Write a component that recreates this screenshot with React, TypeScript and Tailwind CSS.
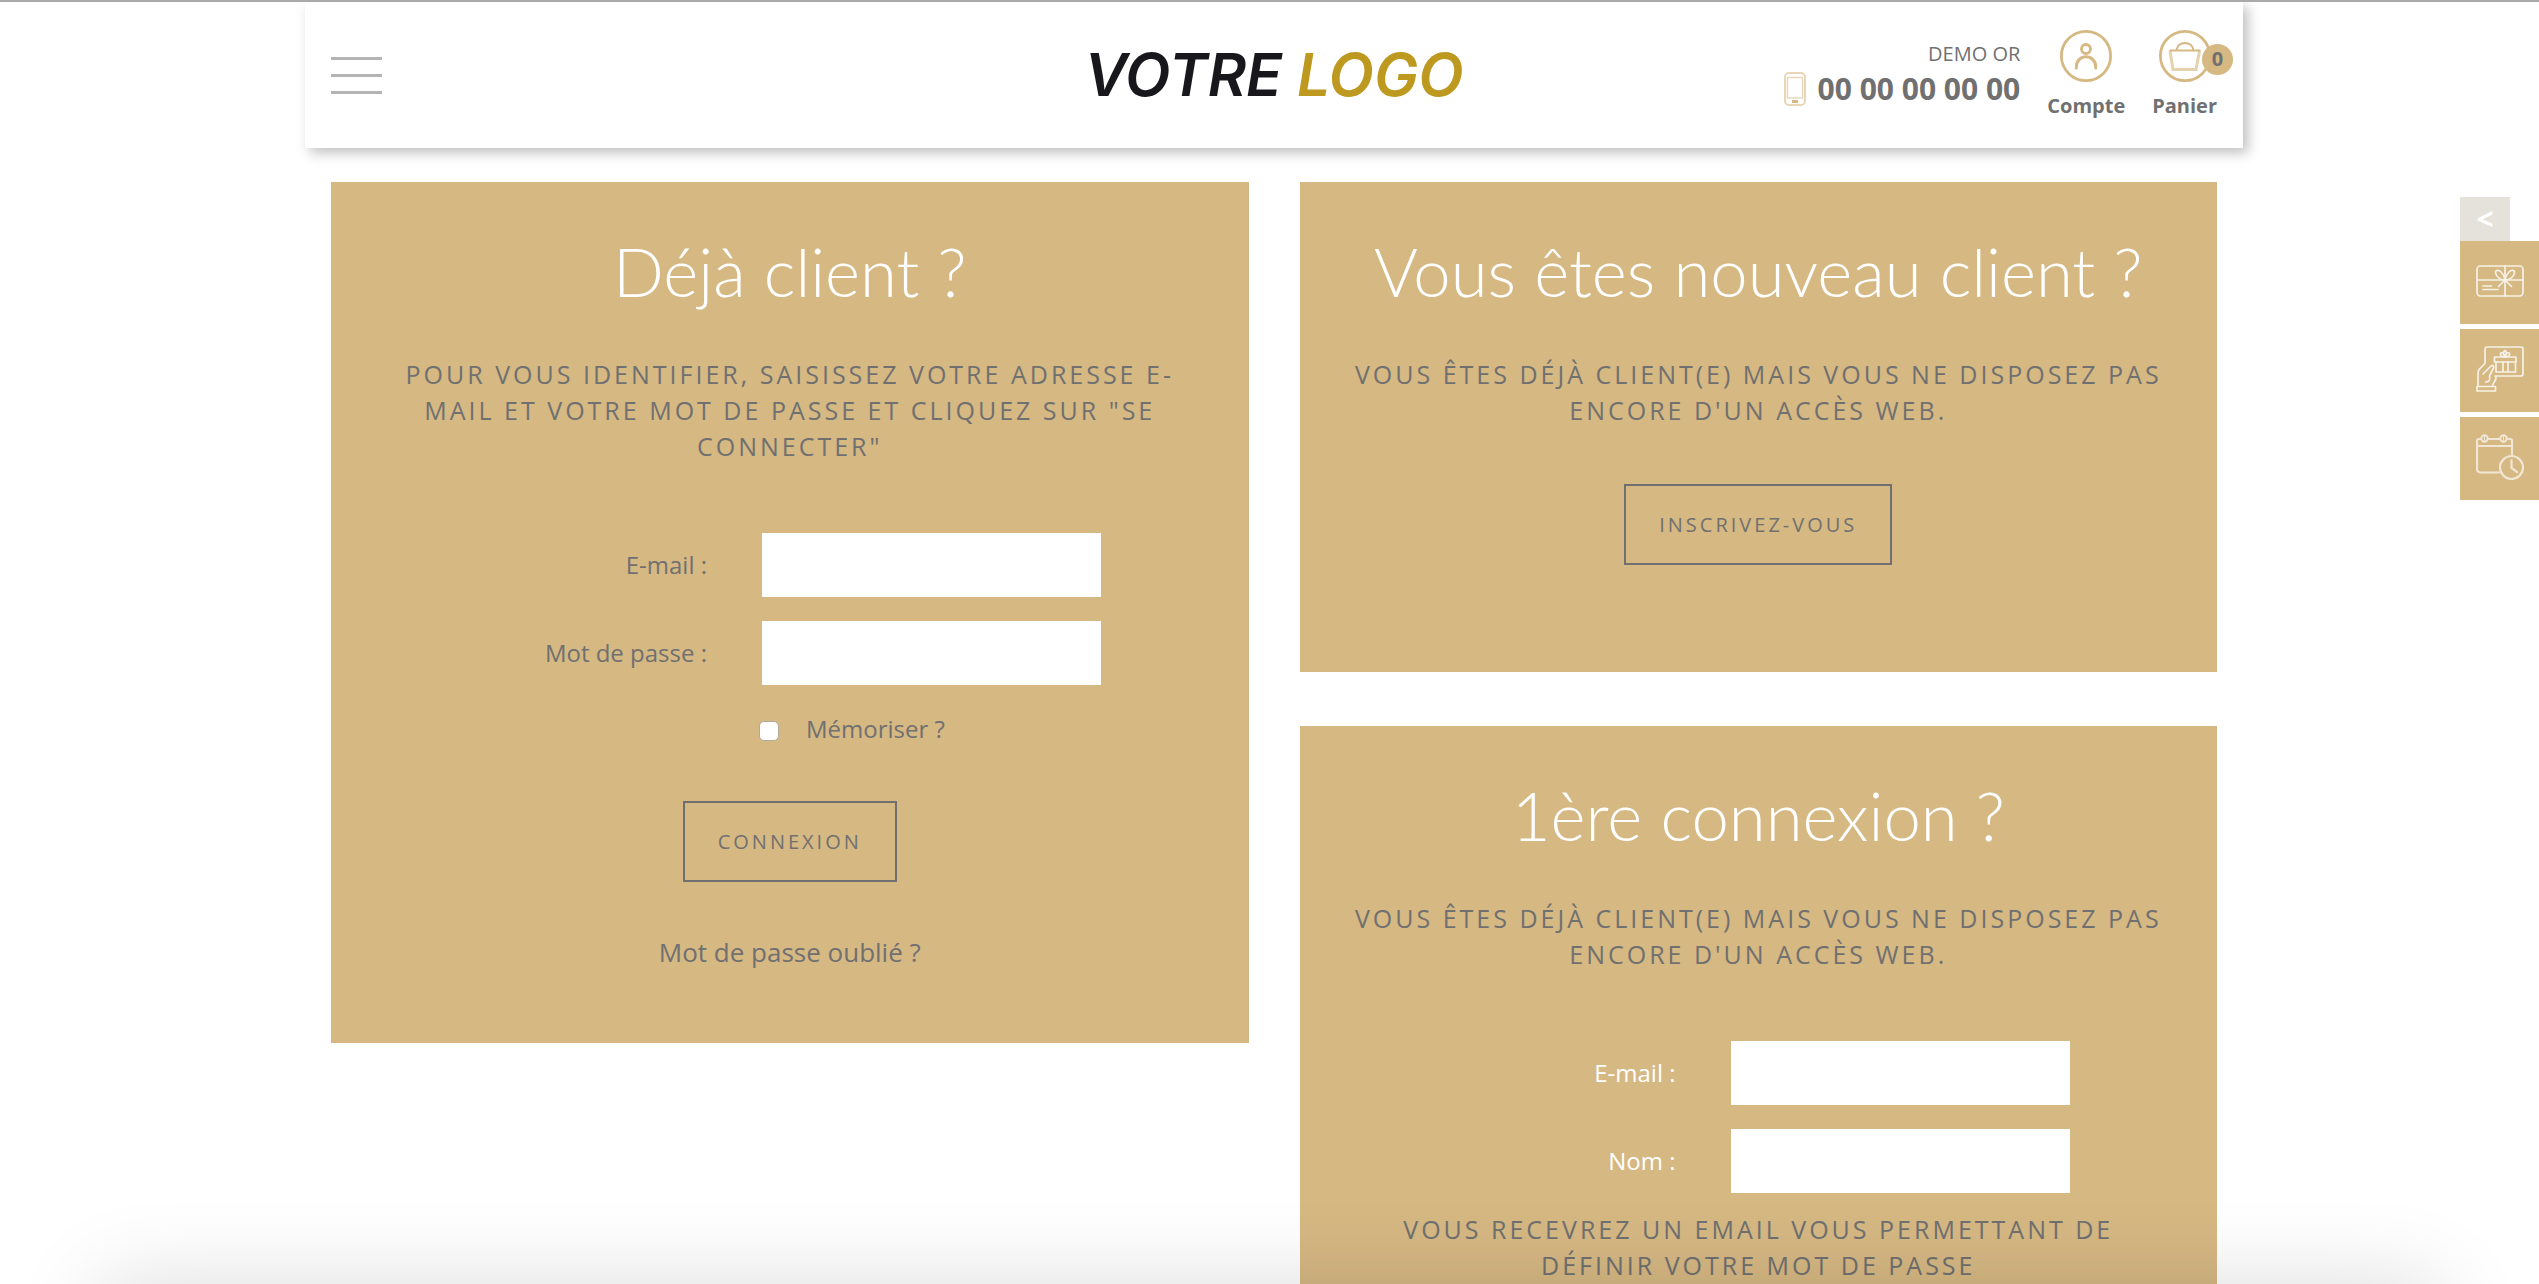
import { useState } from 'react';
import type { ReactNode } from 'react';

const SUBTITLE = "Vous êtes déjà client(e) mais vous ne disposez pas encore d'un accès web.";

const PhoneIcon = () => (
    <svg width="22" height="34" viewBox="0 0 22 34" fill="none" stroke="#e8d6b6" aria-hidden="true">
        <rect x="1" y="1" width="20" height="32" rx="4" strokeWidth="2" />
        <rect x="3.5" y="5.5" width="15" height="20.5" strokeWidth="1.4" />
        <rect x="8" y="28" width="6" height="3" fill="#d6b883" stroke="none" />
    </svg>
);

const AccountIcon = () => (
    <svg width="52" height="52" viewBox="0 0 52 52" fill="none" stroke="#d6b883" aria-hidden="true">
        <circle cx="26" cy="26" r="24.6" strokeWidth="2.8" />
        <circle cx="26" cy="19" r="4.5" strokeWidth="2.8" />
        <path d="M16.3 38v-1.5a9.7 9.7 0 0 1 19.4 0V38" strokeWidth="3" strokeLinecap="round" />
    </svg>
);

const BasketIcon = () => (
    <svg width="52" height="52" viewBox="0 0 52 52" fill="none" stroke="#d6b883" aria-hidden="true">
        <circle cx="26" cy="26" r="24.6" strokeWidth="2.8" />
        <path d="M17.5 20c1-4.5 4.5-7 8.5-7s7.5 2.5 8.5 7" strokeWidth="2" />
        <path d="M10.5 20.5h31" strokeWidth="2" />
        <path d="M11 21l3 18.5h23L40.5 21" strokeWidth="3" opacity=".65" />
    </svg>
);

const GiftCardIcon = () => (
    <svg width="48" height="32" viewBox="0 0 48 32" fill="none" stroke="white" strokeWidth="1.7" strokeLinecap="round" opacity=".8" aria-hidden="true">
        <rect x="1" y="1" width="46" height="30" rx="3.5" />
        <path d="M29 1v30M1 15h46M7 21h8.5M7 24.5h15" />
        <path d="M29 15c-5 0-9.5-4-9.5-7.5C19.5 4.5 23 5 25 7c2 2 3.5 5 4 8zM29 15c5 0 9.5-4 9.5-7.5C38.5 4.5 35 5 33 7c-2 2-3.5 5-4 8z" />
        <path d="M29 15l-6.5 6.5M29 15l6.5 6.5" />
    </svg>
);

const OfferIcon = () => (
    <svg width="48" height="46" viewBox="0 0 48 46" fill="none" stroke="white" strokeWidth="1.7" strokeLinecap="round" strokeLinejoin="round" opacity=".8" aria-hidden="true">
        <path d="M9 17V3a2 2 0 0 1 2-2h34a2 2 0 0 1 2 2v25a2 2 0 0 1-2 2H19" />
        <rect x="18.5" y="11" width="21.5" height="5" />
        <path d="M20 16v10h19.5V16M27 16v10M32 16v10" />
        <path d="M29 11c-3.5 0-5-2-4.5-3.5s3.5-1 4.5 3.5c1-4.5 4-5 4.5-3.5S32.5 11 29 11zM29 11c-2-3-1.5-5.5 0-6.5 1.5 1 2 3.5 0 6.5z" />
        <path d="M8.5 18L3 23.5c-1 1.5-1 3-1 5V40M7 28l8-8c1.5-1.5 3.5 0 2.5 2l-4 8c1 4-.5 6-4 6" />
        <path d="M20 31c.5 4-3 5-3.5 9" />
        <rect x="1" y="40.5" width="18.5" height="4.5" />
    </svg>
);

const CalendarIcon = () => (
    <svg width="48" height="46" viewBox="0 0 48 46" fill="none" stroke="white" strokeLinecap="round" opacity=".65" aria-hidden="true">
        <path d="M5 5H3a2 2 0 0 0-2 2v28a3.5 3.5 0 0 0 3.5 3.5H23M12 5h12M31 5h3a2 2 0 0 1 2 2v14M1 12h35" strokeWidth="2.2" />
        <circle cx="8.5" cy="4.5" r="3.2" strokeWidth="2" />
        <circle cx="27.5" cy="4.5" r="3.2" strokeWidth="2" />
        <path d="M8.5 2v5M27.5 2v5" strokeWidth="1" />
        <circle cx="35.5" cy="33.5" r="11.5" strokeWidth="2.2" />
        <path d="M35.5 26v8l5.5 4" strokeWidth="2.2" />
    </svg>
);

const Card = ({ title, subtitle, className, children }: { title: string; subtitle: string; className: string; children: ReactNode }) => (
    <section className={`bg-[#d6b883] px-12 pt-[43px] text-center ${className}`}>
        <h2 className="font-['Lato'] text-[67px] leading-[92px] font-light text-white">{title}</h2>
        <p className="mt-[39px] text-[25px] leading-9 tracking-[3px] uppercase">{subtitle}</p>
        {children}
    </section>
);

const Field = ({ id, label, type, value, onChange, labelClass = '' }: { id: string; label: string; type: string; value: string; onChange: (v: string) => void; labelClass?: string }) => (
    <div className="flex items-center gap-[55px]">
        <label htmlFor={id} className={`w-[328px] text-right text-[24px] leading-8 ${labelClass}`}>{label}</label>
        <input
            id={id}
            type={type}
            value={value}
            onChange={e => onChange(e.target.value)}
            className="h-16 w-[339px] bg-white px-4 text-[24px] focus:outline-none"
        />
    </div>
);

const buttonClass = 'h-[81px] border-2 border-[#707070] px-[33px] text-[20px] tracking-[3px] uppercase';

const App = () => {
    const [login, setLogin] = useState({ email: '', password: '', remember: false });
    const [first, setFirst] = useState({ email: '', name: '' });

    return (
        <div className="h-screen overflow-hidden border-t-2 border-[#a9a9a9] bg-white pl-[9px] font-['Open_Sans',sans-serif] text-[#707070]">
            <header className="mx-auto grid h-[146px] max-w-[1938px] grid-cols-[1fr_auto_1fr] items-center bg-white px-[26px] shadow-[5px_5px_12px_rgba(0,0,0,0.25)]">
                <button type="button" aria-label="Menu" className="flex w-[51px] flex-col gap-[14px]">
                    <span className="h-[3px] bg-[#b4b4b4]" />
                    <span className="h-[3px] bg-[#b4b4b4]" />
                    <span className="h-[3px] bg-[#b4b4b4]" />
                </button>
                <a href="#" className="font-['Inter'] text-[59px] leading-[60px] font-semibold text-[#17171c] italic">
                    VOTRE <span className="text-[#bd991f]">LOGO</span>
                </a>
                <div className="flex items-center justify-end">
                    <div className="mr-[27px] text-right">
                        <div className="text-[20px] leading-7">DEMO OR</div>
                        <div className="flex items-center gap-3 text-[30px] leading-[42px] font-bold">
                            <PhoneIcon />
                            <span>00 00 00 00 00</span>
                        </div>
                    </div>
                    <a href="#" className="mr-[27px] flex flex-col items-center text-[20px] leading-7 font-bold">
                        <AccountIcon />
                        <span className="mt-[10px]">Compte</span>
                    </a>
                    <a href="#" className="relative flex flex-col items-center text-[20px] leading-7 font-bold">
                        <BasketIcon />
                        <span className="absolute top-[14px] -right-4 size-[31px] rounded-full bg-[#d6b883] text-center leading-[30px]">0</span>
                        <span className="mt-[10px]">Panier</span>
                    </a>
                </div>
            </header>

            <main className="mx-auto mt-[34px] grid max-w-[1938px] grid-cols-2 items-start gap-[51px] px-[26px]">
                <Card
                    title="Déjà client ?"
                    subtitle={'Pour vous identifier, saisissez votre adresse e-mail et votre mot de passe et cliquez sur "se connecter"'}
                    className="pb-[73px]"
                >
                    <form className="mt-[69px]" onSubmit={e => e.preventDefault()}>
                        <div className="space-y-6">
                            <Field id="login-email" label="E-mail :" type="email" value={login.email} onChange={v => setLogin({ ...login, email: v })} />
                            <Field id="login-password" label="Mot de passe :" type="password" value={login.password} onChange={v => setLogin({ ...login, password: v })} />
                        </div>
                        <div className="mt-7 flex items-center gap-[27px] pl-[380px]">
                            <input
                                id="remember"
                                type="checkbox"
                                checked={login.remember}
                                onChange={e => setLogin({ ...login, remember: e.target.checked })}
                                className="mt-1 size-5 appearance-none rounded-[5px] border border-[#b0a999] bg-white checked:bg-[#707070]"
                            />
                            <label htmlFor="remember" className="text-[24px] leading-8">Mémoriser ?</label>
                        </div>
                        <button type="submit" className={`mt-[56px] ${buttonClass}`}>Connexion</button>
                    </form>
                    <a href="#" className="mt-[52px] inline-block text-[26px] leading-9">Mot de passe oublié ?</a>
                </Card>

                <div className="flex flex-col gap-[54px]">
                    <Card title="Vous êtes nouveau client ?" subtitle={SUBTITLE} className="pb-[107px]">
                        <button type="button" className={`mt-[56px] ${buttonClass}`}>Inscrivez-vous</button>
                    </Card>

                    <Card title="1ère connexion ?" subtitle={SUBTITLE} className="pb-[107px]">
                        <form className="mt-[69px]" onSubmit={e => e.preventDefault()}>
                            <div className="space-y-6">
                                <Field id="first-email" label="E-mail :" type="email" value={first.email} onChange={v => setFirst({ ...first, email: v })} labelClass="text-white" />
                                <Field id="first-name" label="Nom :" type="text" value={first.name} onChange={v => setFirst({ ...first, name: v })} labelClass="text-white" />
                            </div>
                            <p className="mt-[18px] px-8 text-[25px] leading-9 tracking-[3px] uppercase">Vous recevrez un email vous permettant de définir votre mot de passe</p>
                        </form>
                    </Card>
                </div>
            </main>

            <aside className="fixed top-[197px] right-0 flex w-[79px] flex-col">
                <button type="button" className="h-11 w-[50px] bg-[#e5e2db] text-[30px] leading-10 font-bold text-white">&lt;</button>
                <div className="flex flex-col gap-[5px]">
                    <a href="#" aria-label="Carte cadeau" className="flex h-[83px] items-center bg-[#d6b883] pb-1 pl-4"><GiftCardIcon /></a>
                    <a href="#" aria-label="Offres" className="flex h-[83px] items-center bg-[#d6b883] pb-1 pl-4"><OfferIcon /></a>
                    <a href="#" aria-label="Rendez-vous" className="flex h-[83px] items-center bg-[#d6b883] pb-1 pl-4"><CalendarIcon /></a>
                </div>
            </aside>

            {/* soft shade along the bottom of the window */}
            <div className="pointer-events-none fixed inset-x-[100px] top-full h-40 shadow-[0_0_90px_rgba(0,0,0,0.14)]" />
        </div>
    );
};

export default App;
